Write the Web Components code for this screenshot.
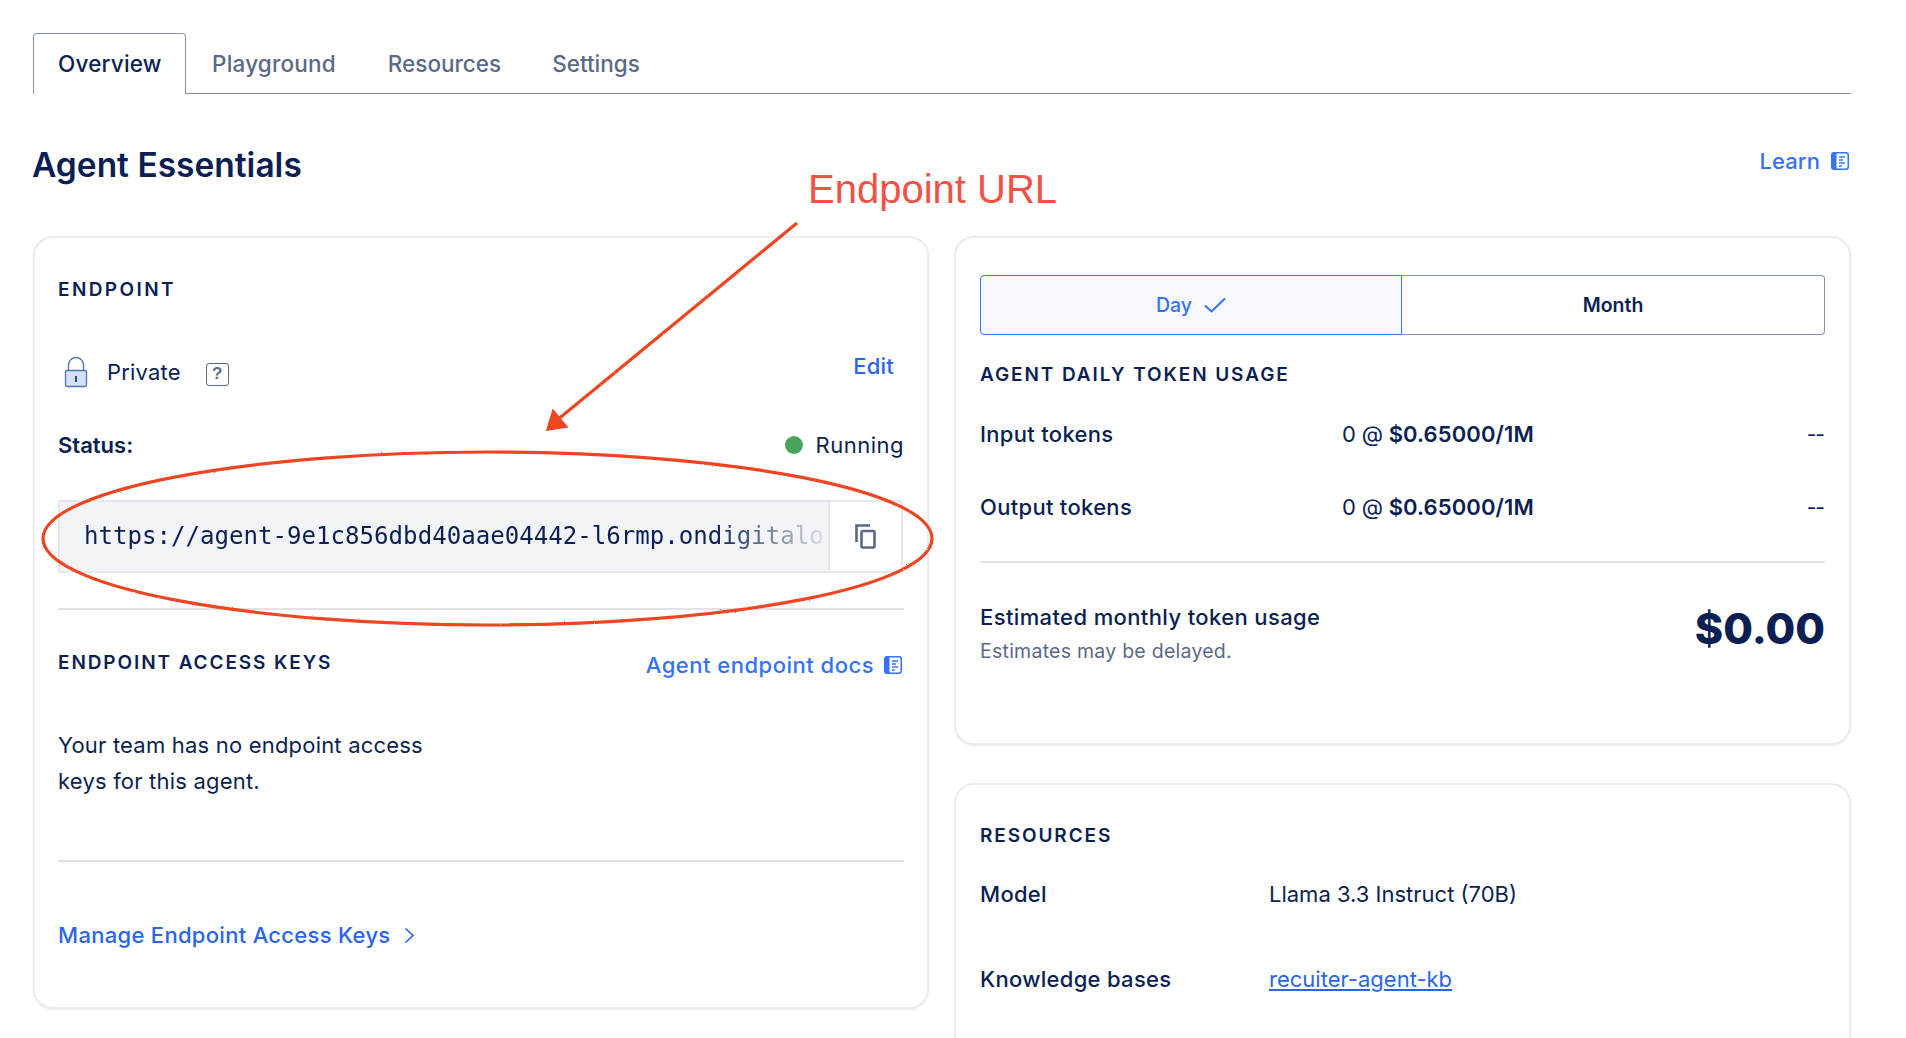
<!DOCTYPE html>
<html lang="en"><head><meta charset="utf-8"><title>Agent Essentials</title>
<style>
html,body{margin:0;padding:0;background:#fff;overflow:hidden;height:100%}
body{font-family:"Inter","Liberation Sans",sans-serif;color:#0b1f52}
</style></head><body>
<agent-page>
  <tab-bar slot="tabs"></tab-bar>
  <page-header slot="header" title="Agent Essentials"></page-header>
  <endpoint-card slot="left"></endpoint-card>
  <usage-card slot="right"></usage-card>
  <resources-card slot="right"></resources-card>
  <url-annotation slot="overlay"></url-annotation>
</agent-page>
<script>
const ICONS={
book:`<svg width="18" height="18" viewBox="0 0 18 18"><rect x=".75" y=".75" width="16.5" height="16.5" rx="2.5" fill="#fff" stroke="#3572f5" stroke-width="1.5"/><path d="M5.5 .5H3a2.5 2.5 0 0 0-2.5 2.5v12A2.5 2.5 0 0 0 3 17.5h2.5z" fill="#3572f5"/><path d="M8 5h6M8 8h4M8 11h6M8 14h3" stroke="#3572f5" stroke-width="1.4"/></svg>`,
lock:`<svg width="24" height="31" viewBox="0 0 24 31"><path d="M4.5 14V8a7.5 7.5 0 0 1 15 0v6" fill="none" stroke="#4a73c0" stroke-width="1.3"/><rect x="1.5" y="13.5" width="21" height="16" rx="1.5" fill="#d3e0f8" stroke="#4a73c0" stroke-width="1.3"/><path d="M12 19v6" stroke="#0b1f52" stroke-width="1.6"/></svg>`,
copy:`<svg width="21" height="25" viewBox="0 0 21 25" fill="none" stroke="#5b6987" stroke-width="2.6"><path d="M1.5 18V1.5H15"/><rect x="6.5" y="7" width="13" height="16.5" rx="1"/></svg>`,
check:`<svg width="22" height="16" viewBox="0 0 22 16" fill="none" stroke="#3572f5" stroke-width="2"><path d="M1 8.5l6.5 6L21 1.5"/></svg>`,
chev:`<svg width="11" height="17" viewBox="0 0 11 17" fill="none" stroke="#2b65e8" stroke-width="1.7"><path d="M1.5 1.5l7.5 7-7.5 7"/></svg>`};
const define=(name,css,html)=>customElements.define(name,class extends HTMLElement{
  constructor(){super();const s=this.attachShadow({mode:'open'});
    s.innerHTML=`<style>:host,*{box-sizing:border-box}${css}</style>`+(typeof html==='function'?html(this):html);}
});
define('agent-page',`
:host{display:block;padding:33px 55px 0 33px;width:1906px}
.cols{display:grid;grid-template-columns:896px 897px;column-gap:25px;align-items:start}
.col{display:flex;flex-direction:column;gap:38px}`,
`<slot name="tabs"></slot><slot name="header"></slot>
<div class="cols"><div class="col"><slot name="left"></slot></div><div class="col"><slot name="right"></slot></div></div>
<slot name="overlay"></slot>`);

define('tab-bar',`
:host{display:flex;height:61px;border-bottom:1.5px solid #8491ae;font-size:22.5px;color:#5b6987;font-weight:500;letter-spacing:.2px}
.t{display:flex;align-items:center;margin-left:26px;padding-right:26px;height:60px}
.t.n{letter-spacing:0}
.t.s{margin-left:25px}
.t.a{margin:0;padding:0 24px 2px;width:153px;height:61px;background:#fff;border:1.5px solid #8491ae;border-bottom:0;border-radius:4px 4px 0 0;color:#0b1f52;margin-bottom:-1.5px;font-weight:500}`,
`<div class="t a">Overview</div><div class="t">Playground</div><div class="t n">Resources</div><div class="t n s">Settings</div>`);

define('page-header',`
:host{display:flex;justify-content:space-between;height:142px;padding-top:48px}
h1{margin:0 0 0 -1px;font-size:33.5px;line-height:46px;font-weight:600;color:#0b1f52;letter-spacing:0}
a{display:flex;align-items:center;gap:11px;height:40px;margin-top:-1px;color:#3572f5;font-size:22px;margin-right:2px;align-self:flex-start;font-weight:500;letter-spacing:.1px}`,
h=>`<h1>${h.getAttribute('title')}</h1><a>Learn ${ICONS.book}</a>`);

define('section-title',`
:host{display:block;font-size:19px;line-height:28px;font-weight:600;letter-spacing:1.9px;color:#0b1f52;white-space:nowrap}`,`<slot></slot>`);

define('url-field',`
:host{display:flex;height:73px;border:2px solid #e5e7ec;border-radius:3px;background:#fff;width:845px}
.u{flex:1;min-width:0;background:#f3f4f8;padding-left:24px;display:flex;align-items:center;border-right:2px solid #e5e7ec}
code{font:24.1px/1 "DejaVu Sans Mono",monospace;letter-spacing:0;color:#0b1f52;white-space:nowrap;-webkit-mask-image:linear-gradient(90deg,#000 630px,rgba(0,0,0,.08) 742px);mask-image:linear-gradient(90deg,#000 630px,rgba(0,0,0,.08) 742px);display:block}
.c{width:71px;flex:none;display:flex;align-items:center;justify-content:center;padding-bottom:1px}`,
`<div class="u"><code>https://agent-9e1c856dbd40aae04442-l6rmp.ondigitalo</code></div><div class="c">${ICONS.copy}</div>`);

define('endpoint-card',`
:host{display:block;height:773px;border:2px solid #eaecf1;border-radius:20px;background:#fff;padding:38px 24px 0 23px;box-shadow:0 1px 2px rgba(20,30,70,.08);font-size:22px;letter-spacing:.2px;color:#0b1f52}
.row{display:flex;justify-content:space-between}
.first{letter-spacing:2.4px}
.priv{height:40px;margin-top:48px;margin-right:9px}
.priv .l{display:flex;align-items:center;gap:19px;padding-left:6px}
.q{width:23px;height:23px;border:1.5px solid #5b6987;border-radius:3px;font:700 17px/20px "Liberation Sans",sans-serif;color:#5b6987;text-align:center;margin-left:6px;margin-top:4px}
.edit{color:#2b65e8;font-weight:500;line-height:30px;margin-top:-1px}
.status{height:30px;margin-top:38px;align-items:center;margin-right:-1px}
.status b{font-weight:600;letter-spacing:0}
.run{display:flex;align-items:center;gap:13px;letter-spacing:.5px}
.dot{width:18px;height:18px;border-radius:50%;background:#4aa55c}
url-field{margin-top:40px}
hr{border:0;border-top:2px solid #e2e3e8;margin:0;width:846px}
.h1{margin-top:35px}
.keys{margin-top:37px;height:34px;align-items:flex-start;margin-right:1px}
.keys section-title{margin-top:2px}
.docs{display:flex;align-items:center;gap:10px;color:#3572f5;font-weight:500;line-height:34px;margin-top:1px;letter-spacing:.5px}
p{margin:46px 0 0;line-height:36px;width:420px}
.h2{margin-top:61px}
.m{display:flex;align-items:center;gap:13px;margin-top:56px;height:34px;color:#2b65e8;font-weight:500;letter-spacing:.3px}`,
`<section-title class="first">ENDPOINT</section-title>
<div class="row priv"><div class="l">${ICONS.lock}<span>Private</span><span class="q">?</span></div><a class="edit">Edit</a></div>
<div class="row status"><b>Status:</b><span class="run"><i class="dot"></i>Running</span></div>
<url-field></url-field>
<hr class="h1">
<div class="row keys"><section-title>ENDPOINT ACCESS KEYS</section-title><a class="docs">Agent endpoint docs ${ICONS.book}</a></div>
<p>Your team has no endpoint access<br>keys for this agent.</p>
<hr class="h2">
<a class="m">Manage Endpoint Access Keys ${ICONS.chev}</a>`);

define('range-toggle',`
:host{display:flex;height:60px;font-size:19.5px;font-weight:600;color:#0b1f52}
div{display:flex;align-items:center;justify-content:center;gap:12px}
.d{width:422px;background:#f6f9ff;border:1.5px solid #3572f5;border-radius:4px 0 0 4px;color:#3572f5;font-weight:500}
.m{flex:1;border:1.5px solid #8491ae;border-left:0;border-radius:0 4px 4px 0}`,
`<div class="d">Day ${ICONS.check}</div><div class="m">Month</div>`);

define('token-row',`
:host{display:grid;grid-template-columns:362px 1fr auto;align-items:center;height:36px;font-size:22px;color:#0b1f52}
b{font-weight:500;letter-spacing:.3px}.p{letter-spacing:-.2px}.p b{font-weight:600;letter-spacing:.1px}
.e{letter-spacing:-1px;font-size:21px;padding-right:1px}`,
h=>`<b>${h.getAttribute('label')}</b><span class="p">0 @ <b>$0.65000/1M</b></span><span class="e">--</span>`);

define('usage-card',`
:host{display:block;height:509px;border:2px solid #eaecf1;border-radius:20px;background:#fff;padding:37px 24px 0 24px;box-shadow:0 1px 2px rgba(20,30,70,.08)}
section-title{margin-top:26px}
token-row.a{margin-top:27px}
token-row.b{margin-top:37px}
hr{border:0;border-top:2px solid #e2e3e8;margin:36px 0 0}
.est{display:flex;justify-content:space-between;align-items:flex-start;margin-top:38px}
.t{font-size:22px;line-height:32px;font-weight:500;letter-spacing:.38px}
.s{font-size:19.5px;line-height:30px;color:#5b6987;margin-top:3px;letter-spacing:.25px}
.v{font-size:43px;line-height:60px;font-weight:800;color:#0b1f52;margin-top:-3px}`,
`<range-toggle></range-toggle><section-title>AGENT DAILY TOKEN USAGE</section-title>
<token-row class="a" label="Input tokens"></token-row><token-row class="b" label="Output tokens"></token-row>
<hr><div class="est"><div><div class="t">Estimated monthly token usage</div><div class="s">Estimates may be delayed.</div></div><div class="v">$0.00</div></div>`);

define('resources-card',`
:host{display:block;height:400px;border:2px solid #eaecf1;border-radius:20px;background:#fff;padding:37px 24px 0 24px;font-size:22px;color:#0b1f52}
.r{display:grid;grid-template-columns:289px 1fr;height:36px;align-items:center}
.r b{font-weight:500;letter-spacing:.3px}
.a{margin-top:26px}.b{margin-top:49px}
a{color:#2b65e8;text-decoration:underline}`,
`<section-title>RESOURCES</section-title>
<div class="r a"><b>Model</b><span>Llama 3.3 Instruct (70B)</span></div>
<div class="r b"><b>Knowledge bases</b><a>recuiter-agent-kb</a></div>`);

define('url-annotation',`
:host{display:block;position:absolute;left:0;top:0;width:1906px;height:1038px;pointer-events:none}
.l{position:absolute;left:808px;top:163px;font:40px/52px "Liberation Sans",sans-serif;color:#ef5246;white-space:nowrap}
svg{position:absolute;left:0;top:0}`,
`<div class="l">Endpoint URL</div>
<svg width="1906" height="1038" viewBox="0 0 1906 1038" fill="none">
<defs><filter id="r" x="-5%" y="-5%" width="110%" height="110%"><feTurbulence type="fractalNoise" baseFrequency=".35" numOctaves="2" seed="3"/><feDisplacementMap in="SourceGraphic" scale="1.6"/></filter></defs>
<g filter="url(#r)" stroke="#ee4424" stroke-width="3.2">
<ellipse cx="487.5" cy="538.5" rx="444.5" ry="86.5"/>
<path d="M797 223L556 421"/>
<path d="M547 430L553 410L567 427z" fill="#ee4424" stroke-width="1.5"/>
</g></svg>`);
</script>
</body></html>
